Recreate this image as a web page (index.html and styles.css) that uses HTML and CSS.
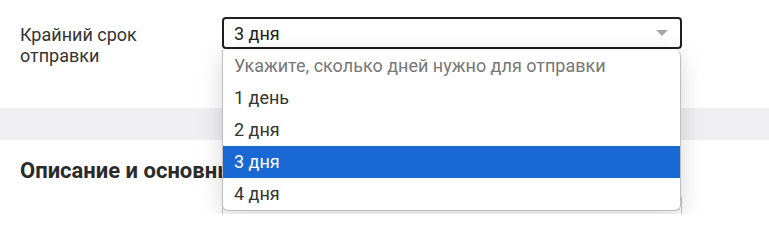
FILE: index.html
```html
<!DOCTYPE html>
<html lang="ru">
<head>
<meta charset="utf-8">
<link rel="stylesheet" href="styles.css">
</head>
<body>
<div class="page">
  <div class="row">
    <div class="label">Крайний срок<br>отправки</div>
    <div class="field">
      <div class="select">
        <span class="value">3 дня</span>
        <span class="arrow"></span>
      </div>
      <ul class="menu">
        <li class="opt hint">Укажите, сколько дней нужно для отправки</li>
        <li class="opt">1 день</li>
        <li class="opt">2 дня</li>
        <li class="opt active">3 дня</li>
        <li class="opt">4 дня</li>
      </ul>
    </div>
  </div>
  <div class="band"></div>
  <div class="section">
    <h2 class="title">Описание и основные характеристики</h2>
    <div class="row2">
      <div class="spacer"></div>
      <div class="input"></div>
    </div>
  </div>
</div>
</body>
</html>
```

FILE: styles.css
```css
* { box-sizing: border-box; }
html, body { margin: 0; padding: 0; background: #fff; }
body {
  font-family: Roboto, "Noto Sans", Arial, sans-serif;
  color: #333;
  font-size: 18px;
  overflow: hidden;
  width: 769px;
  height: 214px;
}
.page { position: relative; }
.row {
  display: flex;
  padding: 17px 20px 0 20px;
  height: 108px;
}
.label {
  width: 202px;
  line-height: 21px;
  padding-top: 7px;
}
.field {
  position: relative;
  width: 460px;
}
.select {
  height: 32px;
  border: 2px solid #1f1f1f;
  border-radius: 4px;
  display: flex;
  align-items: center;
  justify-content: space-between;
  padding: 0 12px 0 10px;
  background: #fff;
}
.value { line-height: 21px; color: #222; }
.arrow {
  width: 0; height: 0;
  border-left: 6px solid transparent;
  border-right: 6px solid transparent;
  border-top: 6px solid #a8a8a8;
}
.menu {
  position: absolute;
  z-index: 5;
  top: 33px;
  left: 0;
  width: 459px;
  margin: 0;
  padding: 0;
  list-style: none;
  background: #fff;
  border: 1px solid #bdbdbd;
  border-top: none;
  border-radius: 0 6px 6px 6px;
  box-shadow: 0 6px 24px rgba(0,0,0,0.16);
  overflow: hidden;
}
.opt {
  height: 32px;
  line-height: 32px;
  padding-left: 11px;
  color: #333;
  white-space: nowrap;
}
.opt.hint { color: #777; }
.opt.active { background: #1a68d3; color: #fff; }
.band {
  height: 32px;
  background: #efeef0;
}
.section {
  padding: 18px 20px 0 20px;
}
.title {
  margin: 0;
  font-size: 22px;
  font-weight: 700;
  line-height: 26px;
  color: #2b2b2b;
  white-space: nowrap;
}
.row2 { display: flex; margin-top: 10px; }
.spacer { width: 202px; }
.input {
  width: 460px;
  height: 32px;
  border: 1px solid #c8c8c8;
  border-radius: 4px;
}
```
